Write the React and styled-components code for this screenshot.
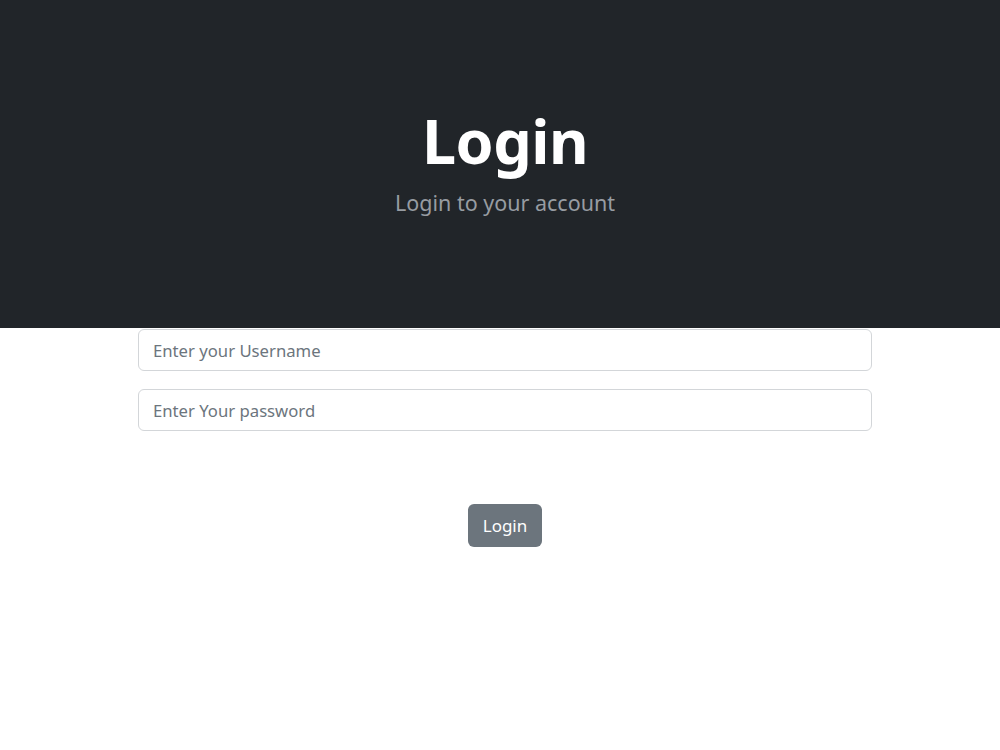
import React from "react";
import styled, { createGlobalStyle } from "styled-components";

const GlobalStyle = createGlobalStyle`
  html, body {
    margin: 0;
    padding: 0;
    background: #ffffff;
    font-family: "Noto Sans", "Open Sans", sans-serif;
  }
`;

export default function App() {
  return (
    <>
      <GlobalStyle />
      <Header>
        <Inner>
          <Title>Login</Title>
          <Subtitle>Login to your account</Subtitle>
        </Inner>
      </Header>
      <Form onSubmit={e => e.preventDefault()}>
        <Input type="text" placeholder="Enter your Username" />
        <Input type="password" placeholder="Enter Your password" />
        <ButtonRow>
          <Button type="submit">Login</Button>
        </ButtonRow>
      </Form>
    </>
  );
}

const Header = styled.header`
  background-color: #212529;
  height: 328px;
  box-sizing: border-box;
  padding-top: 104px;
`;

const Inner = styled.div`
  width: 744px;
  box-sizing: border-box;
  padding-left: 10px;
  margin: 0 auto;
  display: flex;
  flex-direction: column;
  align-items: center;
`;

const Title = styled.h1`
  margin: 0;
  color: #ffffff;
  font-size: 61px;
  font-weight: 700;
  line-height: 1.2;
  letter-spacing: -0.5px;
`;

const Subtitle = styled.p`
  margin: 10px 0 0;
  color: #979ca2;
  font-size: 21.5px;
  font-weight: 400;
  line-height: 1.5;
`;

const Form = styled.form`
  width: 744px;
  box-sizing: border-box;
  padding-left: 10px;
  margin: 1px auto 0;
  display: flex;
  flex-direction: column;
  gap: 18px;
`;

const Input = styled.input`
  display: block;
  width: 100%;
  height: 42px;
  box-sizing: border-box;
  padding: 0 14px;
  border: 1px solid #d3d6d9;
  border-radius: 6px;
  font-family: inherit;
  font-size: 16.7px;
  color: #212529;
  background: #fff;
  outline: none;

  &::placeholder {
    color: #6c757d;
  }
`;

const ButtonRow = styled.div`
  display: flex;
  justify-content: center;
  margin-top: 55px;
`;

const Button = styled.button`
  height: 43px;
  padding: 0 15px;
  border: none;
  border-radius: 6px;
  background-color: #6c757d;
  color: #ffffff;
  font-family: inherit;
  font-size: 17px;
  cursor: pointer;
`;
